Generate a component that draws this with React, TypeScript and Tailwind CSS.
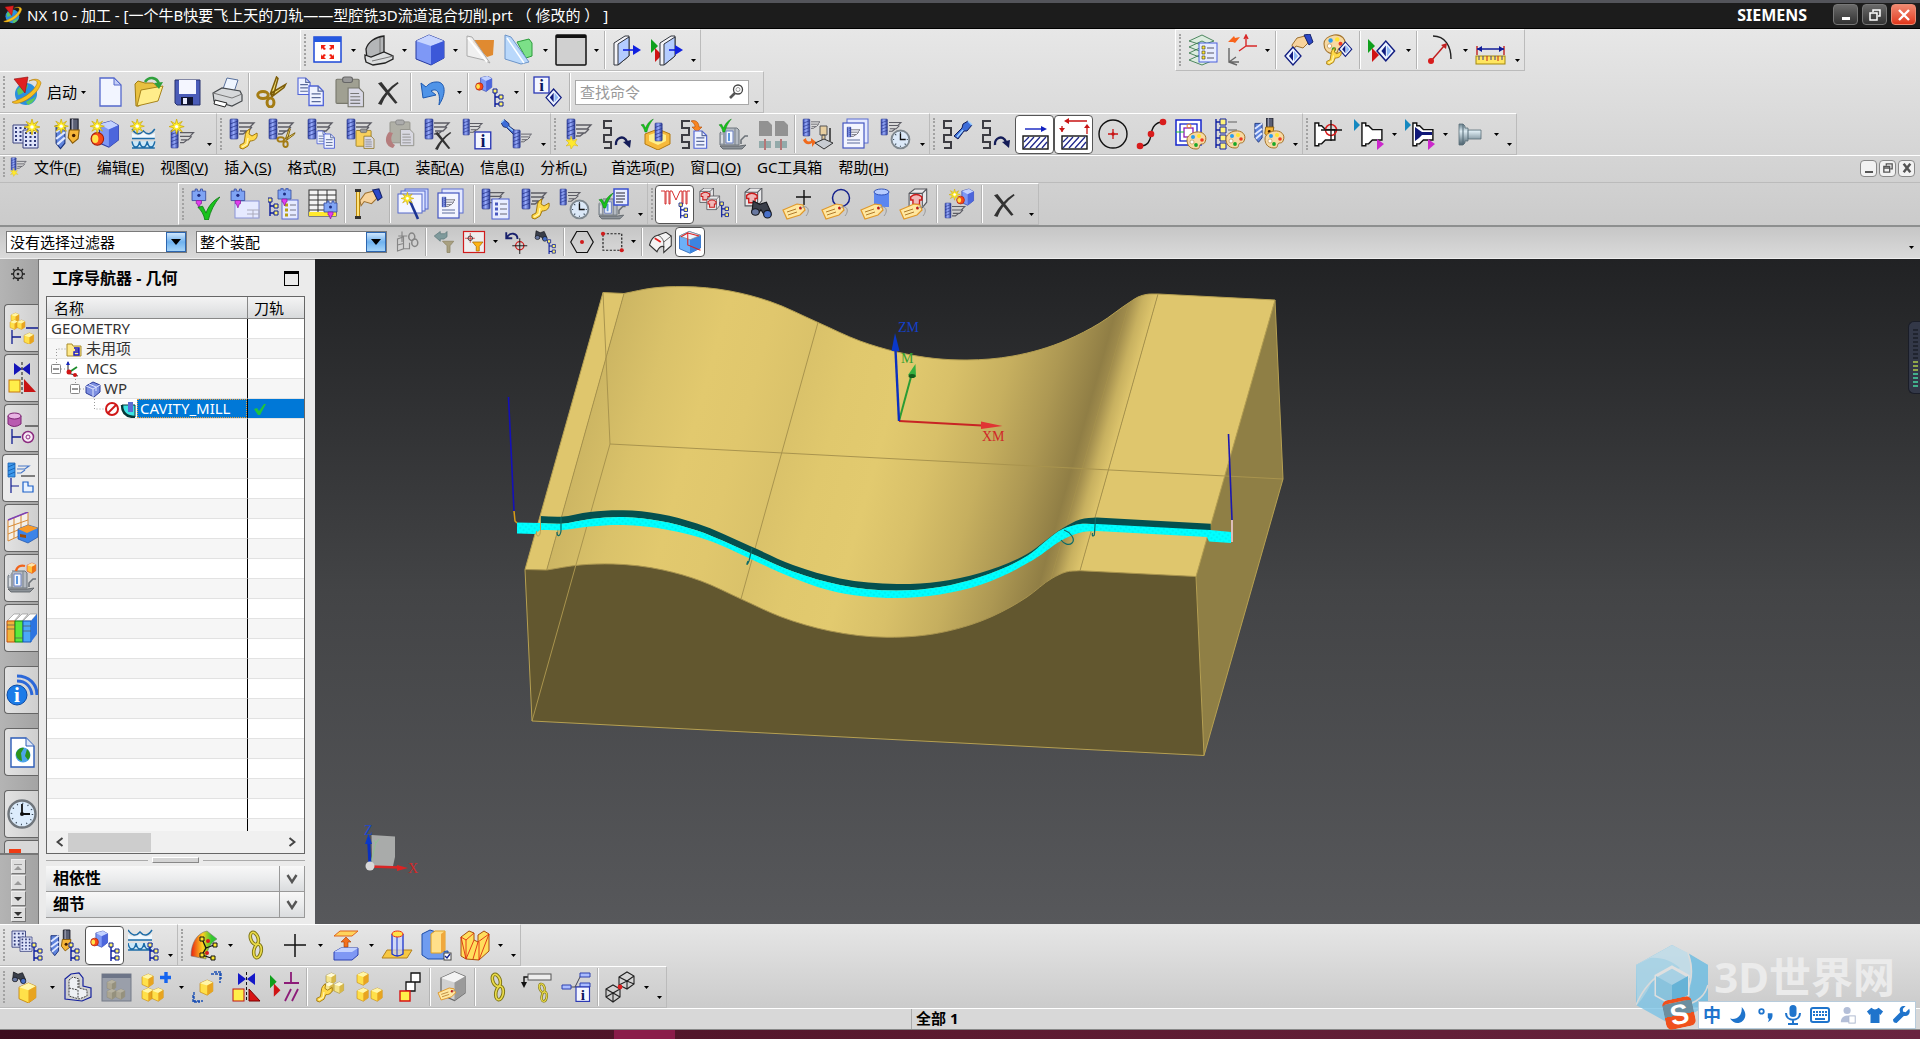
import { useState, type ReactNode } from 'react';

type Pt = [number, number];
type Place = { x?: number; y?: number; s?: number; children?: ReactNode };

const At = ({ x = 0, y = 0, s = 1, children }: Place) => (
  <g transform={`translate(${x} ${y}) scale(${s})`}>{children}</g>
);

/* ---------- icon parts ---------- */

const Drill = (p: Place) => (
  <At {...p}>
    <rect x="0" y="0" width="8" height="20" rx="1" fill="url(#drill)" stroke="#26358c" strokeWidth=".6" />
    <path d="M0 5l8-3M0 9l8-3M0 13l8-3M0 17l8-3" stroke="#26358c" strokeWidth=".8" />
  </At>
);
const Lines = (p: Place) => (
  <At {...p}>
    <path d="M0 3h15l-4 4H0M13 7l-4 4H1M8 11l-4 3H0" fill="none" stroke="#5c5c64" strokeWidth="1.3" />
  </At>
);
const Op = (p: Place) => (
  <At {...p}>
    <Drill x={2} y={1} />
    <Lines x={11} y={2} />
  </At>
);
const Star = (p: Place) => (
  <At {...p}>
    <path d="M8 0l1.4 5L14 2.4 11 6.6l5 1.4-5 1.4 3 4.2-4.6-2.6L8 16l-1.4-5L2 13.6l3-4.2L0 8l5-1.4L2 2.4 6.6 5z" fill="#ffee2e" stroke="#c9a400" strokeWidth=".7" />
    <circle cx="8" cy="8" r="1.8" fill="#fff" />
  </At>
);
const Wrench = (p: Place) => (
  <At {...p}>
    <path d="M12 1l-1 5 3 2 5-3c1 5-2 8-7 8l-2 5-5 3-3-1 0-3 4-2 1-6c0-4 2-7 5-8z" fill="#ffd94a" stroke="#9a6d00" strokeWidth=".9" />
    <path d="M4 19l5-3 1-6" fill="none" stroke="#fff6b8" strokeWidth="1.3" />
  </At>
);
const Scissors = (p: Place) => (
  <At {...p}>
    <path d="M9 11L13 0l1 1-3 11zM9 11L19 5l-1 2-8 6z" fill="#f5e27a" stroke="#7c5c08" />
    <ellipse cx="4" cy="12" rx="3.5" ry="2.3" fill="none" stroke="#a47c14" strokeWidth="2" />
    <ellipse cx="9" cy="17" rx="2.3" ry="3" fill="none" stroke="#a47c14" strokeWidth="2" />
  </At>
);
const Page = (p: Place) => (
  <At {...p}>
    <path d="M0 0h7l4 4v11H0z" fill="#eef2ff" stroke="#4f63d8" />
    <path d="M7 0v4h4M2 6h7M2 9h7M2 12h7" fill="none" stroke="#5a6a9a" />
  </At>
);
const Clip = ({ c = '#a0a092', d = '#77776c', ...p }: Place & { c?: string; d?: string }) => (
  <At {...p}>
    <rect x="0" y="2" width="21" height="22" rx="1" fill={c} stroke={d} />
    <rect x="6" y="0" width="9" height="5" rx="2" fill="#999" stroke="#666" />
    <path d="M11 10h10l4 4v13H11z" fill="#d9d9e6" stroke={d} />
    <path d="M13 15h8M13 18h9M13 21h9M13 24h9" stroke="#777" />
  </At>
);
const Cross = (p: Place) => (
  <At {...p}>
    <path d="M0 1l3-1 14 18-2 1zM17 0l1 1Q7 9 3 20l-3-1Q7 6 17 0z" fill="#333" />
  </At>
);
const Info = (p: Place) => (
  <At {...p}>
    <rect x="0" y="0" width="15" height="16" fill="#f4f6ff" stroke="#2a38b4" strokeWidth="1.3" />
    <text x="7.5" y="14" fontFamily="Liberation Serif, serif" fontWeight="bold" fontSize="17" textAnchor="middle" fill="#0c1660">i</text>
  </At>
);
const Clock = (p: Place) => (
  <At {...p}>
    <circle cx="9" cy="9" r="8.5" fill="#dce9f8" stroke="#7f888f" strokeWidth="1.8" />
    <path d="M9 3v6h5" fill="none" stroke="#111" strokeWidth="1.3" />
    <path d="M9 2v1M9 15v1M2 9h1M15 9h1M4 4l1 1M13 13l1 1M4 14l1-1" stroke="#345" />
  </At>
);
const Check = (p: Place) => (
  <At {...p}>
    <path d="M0 9l4-1 3 6C9 8 13 3 19 0c-5 6-8 12-10 20H6C5 15 3 12 0 9z" fill="#18c41c" stroke="#0a7a10" strokeWidth=".7" />
  </At>
);
const Tree = (p: Place) => (
  <At {...p}>
    <path d="M2 4v14M2 8h4M2 15h4" fill="none" stroke="#0a1c9c" strokeWidth="1.4" />
    <path d="M0 0h4v4H0zM6 6h4v4H6zM6 13h4v4H6z" fill="#fff36a" stroke="#0a1c9c" />
  </At>
);
const Cube = ({ a = '#a9bcff', b = '#5572e8', c = '#2d43b8', e = '#2a3aa0', ...p }: Place & { a?: string; b?: string; c?: string; e?: string }) => (
  <At {...p}>
    <path d="M0 4L9 0l7 3v11l-7 5-9-4z" fill={b} stroke={e} strokeWidth=".8" />
    <path d="M0 4L9 0l7 3-7 4z" fill={a} />
    <path d="M9 7l7-4v11l-7 5z" fill={c} />
  </At>
);
const Yellow = (p: Place) => <Cube {...p} a="#fff6a8" b="#ffe04a" c="#e8a420" e="#c48208" />;
const Palette = (p: Place) => (
  <At {...p}>
    <path d="M9 0c7-1 12 4 9 10-1 3-4 1-5 3s0 4-4 4C2 17 0 12 0 8s4-7 9-8z" fill="#f7d9a2" stroke="#a4742c" />
    <circle cx="6" cy="5" r="2" fill="#2a9df0" />
    <circle cx="12" cy="4" r="2" fill="#ffe52e" />
    <circle cx="15" cy="8" r="1.8" fill="#f03a20" />
    <circle cx="5" cy="10" r="2" fill="#fff" stroke="#a4742c" strokeWidth=".5" />
    <circle cx="9" cy="13" r="1.9" fill="#18a828" />
  </At>
);
const Machine = (p: Place) => (
  <At {...p}>
    <path d="M0 6l4-5h13l2 2v15H0z" fill="#b4bac2" stroke="#6d757c" />
    <path d="M4 1v17M15 1v17" stroke="#7a828a" />
    <path d="M6 4h7v12H6z" fill="#f4f8ff" stroke="#6c80c0" />
    <path d="M9 6v8" stroke="#5c98e0" strokeWidth="2" />
    <path d="M1 5l3-4M2 8v8" stroke="#f0f2f4" strokeWidth="1.2" />
    <path d="M0 19h19l7-1-4 4H3z" fill="#8c9298" stroke="#555b60" strokeWidth=".8" />
    <path d="M21 17v-4l4-4h3" fill="none" stroke="#6c7278" strokeWidth="1.6" />
  </At>
);
const Coil = (p: Place) => (
  <At {...p}>
    <path d="M9 1H1v7h7v7H1v7h7v6H1" fill="none" stroke="#3c3c42" strokeWidth="2" />
  </At>
);
const Spin = (p: Place) => (
  <At {...p}>
    <path d="M1 10C0 3 9-1 12 7" fill="none" stroke="#141c58" strokeWidth="2.4" />
    <path d="M8 7l8-2-1 8z" fill="#141c58" />
  </At>
);
const Torch = (p: Place) => (
  <At {...p}>
    <path d="M9 3l5-3 4 4-5 6-3 0-6 8-4-3 8-8z" fill="#3c6cd8" stroke="#101c58" />
    <path d="M14 0l4 4M3 16l6-7" stroke="#9fd0ff" strokeWidth="1.6" />
  </At>
);
const Spindle = (p: Place) => (
  <At {...p}>
    <path d="M1 2h3V0h2v2h3V0h2v2h3v9H1z" fill="#7fa4f4" stroke="#344a9c" strokeWidth=".8" />
    <circle cx="7.5" cy="6" r="1.5" fill="#1c2c80" />
    <path d="M5 11h5v3H9l-1.5 4L6 14H5z" fill="#e23cf0" stroke="#8a1c9c" strokeWidth=".7" />
  </At>
);
const Bino = (p: Place) => (
  <At {...p}>
    <path d="M2 0l6 3 6-2 4 9-5 4-4-6-3 4-5-3z" fill="#3a3f4a" stroke="#15171c" />
    <ellipse cx="4" cy="10" rx="3.5" ry="3" fill="#6878a0" stroke="#15171c" />
    <ellipse cx="15" cy="12" rx="3.5" ry="3.5" fill="#4870c8" stroke="#15171c" />
  </At>
);
const Tag = (p: Place) => (
  <At {...p}>
    <path d="M0 6L14 0l6 1 2 5-5 5-13 4z" fill="#ffe7a0" stroke="#e0982a" strokeWidth="1.2" />
    <path d="M4 8l9-3M5 11l9-3" stroke="#b07a2c" />
    <circle cx="17.5" cy="4" r="1.5" fill="#c01818" />
    <path d="M18 4c6-4 10 2 5 8" fill="none" stroke="#999" />
  </At>
);
const Chain = (p: Place) => (
  <At {...p}>
    <g fill="none" stroke="#7d7414" strokeWidth="3.4">
      <ellipse cx="7" cy="7" rx="3.5" ry="6" transform="rotate(-20 7 7)" />
      <ellipse cx="10" cy="19" rx="3.5" ry="6.5" transform="rotate(10 10 19)" />
    </g>
    <g fill="none" stroke="#eadb4a" strokeWidth="1.6">
      <ellipse cx="7" cy="7" rx="3.5" ry="6" transform="rotate(-20 7 7)" />
      <ellipse cx="10" cy="19" rx="3.5" ry="6.5" transform="rotate(10 10 19)" />
    </g>
  </At>
);
const Gem = (p: Place) => (
  <At {...p}>
    <path d="M0 9L8 0l8 9-8 9z" fill="#eef4ff" stroke="#101c80" strokeWidth="1.3" />
    <path d="M8 4v10L4 9z" fill="#101c80" />
    <path d="M9 4l4 5-4 5z" fill="#8fb8f4" />
  </At>
);
const Part = (p: Place) => (
  <At {...p}>
    <path d="M9 3l11-3 7 4v14l-9 7-9-4z" fill="#7f98f4" stroke="#2c3ca4" />
    <path d="M9 3l11-3 7 4-9 4z" fill="#c3d2ff" />
    <path d="M18 8l9-4v14l-9 7z" fill="#4c66dc" />
    <ellipse cx="7" cy="17" rx="6" ry="6" fill="#f84818" stroke="#a01c08" />
    <ellipse cx="5" cy="17" rx="3" ry="4" fill="#ffe34a" />
  </At>
);
const Housing = (p: Place) => (
  <At {...p}>
    <path d="M1 4l5-4h11v12l-4 5H1z" fill="#e8e8ea" stroke="#55575c" />
    <path d="M13 4l4-4M1 4h12v13" fill="none" stroke="#55575c" />
    <path d="M2.5 7q5-4 10 0v3h-2v4h-6v-4h-2z" fill="#f0b8b8" stroke="#cc1c1c" strokeWidth="1.3" />
  </At>
);
const Hand = (p: Place) => (
  <At {...p}>
    <path d="M0 10l5-7 8-2 3 7-5 5-7-2-3 4z" fill="#f8d39c" stroke="#9c7030" />
    <path d="M12 0l6-1 3 8-4 3z" fill="#2c48c8" stroke="#16246c" />
  </At>
);
const Flags = (p: Place) => (
  <At {...p}>
    <path d="M0 0l7 7-7 7z" fill="#10a01c" />
    <path d="M4 9l7 7-7 7z" fill="#d01414" />
  </At>
);
const Grid = (p: Place) => (
  <At {...p}>
    <path d="M0 0h15v18H0z" fill="#dfe4fa" stroke="#3c4480" />
    <path d="M3 2v15M7.5 2v15M12 2v15" stroke="#303a78" strokeWidth="2" strokeDasharray="2 2" />
  </At>
);
const Waves = (p: Place) => (
  <At {...p}>
    <path d="M0 4q6 5 12 0 6 5 12 0v6H0z" fill="#eef8ff" />
    <path d="M0 0q6 9 12 2 6 7 12-2M0 10h24" fill="none" stroke="#1c6ca8" strokeWidth="1.5" />
    <path d="M0 13h24v6H0z" fill="#cce8f8" />
    <path d="M0 13q1 6 4 6t4-6q1 6 4 6t4-6q1 6 4 6t4-6M0 20h24" fill="none" stroke="#1c6ca8" strokeWidth="1.5" />
  </At>
);
const Tool = (p: Place) => (
  <At {...p}>
    <path d="M14 0h7v12h-7z" fill="#5a5f74" stroke="#1a1c28" />
    <path d="M16 0v12" stroke="#aab" />
    <path d="M13 10h9l-1 8-5 4-4-5z" fill="#f6b638" stroke="#8a5c08" />
    <circle cx="17" cy="15" r="1.6" fill="#401c00" />
    <path d="M1 6h8v16l-4 5-4-5z" fill="#5f84dc" stroke="#1c347c" />
    <path d="M1 12l8-6M1 18l8-6M2 23l7-6" stroke="#dfe8ff" strokeWidth="2" />
  </At>
);
const Plane = (p: Place) => (
  <At {...p}>
    <path d="M0 7L11 0h4v20L4 29H0z" fill="#f4f4f8" stroke="#30343c" />
    <path d="M4 8l11-7v19L4 29z" fill="#b4ccff" stroke="#30343c" />
  </At>
);
const Holder = (p: Place) => (
  <At {...p}>
    <path d="M1 1h4v3h3l4 4h10v11H12l-4 4H5v2H1z" fill="#fff" stroke="#111" strokeWidth="1.5" />
  </At>
);

const hatch = (
  <>
    <rect x="4" y="18" width="25" height="13" fill="#fff" stroke="#111" strokeWidth="1.4" />
    <path d="M5 30l10-11M11 30l10-11M17 30l10-11M23 30l5-6M5 24l5-5" stroke="#20288c" strokeWidth="1.3" />
  </>
);

const ICONS: Record<string, ReactNode> = {
  fit: <><rect x="2" y="3" width="27" height="25" fill="#fff" stroke="#1c48d8" strokeWidth="1.5" /><path d="M2 3h27v5H2z" fill="#2458e0" /><path d="M9 11h5l-2 2 2 2-2 1-2-2-1 2zM22 11h-5l2 2-2 2 2 1 2-2 1 2zM9 25h5l-2-2 2-2-2-1-2 2-1-2zM22 25h-5l2-2-2-2 2-1 2 2 1-2z" fill="#f02010" /></>,
  orient: <><path d="M3 15C5 8 12 3 21 2v17L4 25z" fill="#b4b6b8" stroke="#222" strokeWidth="1.3" /><path d="M17 4v16" stroke="#777" /><path d="M2 21l6 2 13-5 9 4v3l-8 4-12 2-7-3-1-4z" fill="#dcdedf" stroke="#222" strokeWidth="1.3" /><path d="M9 27l13-3 8-2" fill="none" stroke="#777" /></>,
  shade: <><path d="M2 7L15 1l15 6v17l-13 7L2 25z" fill="#7e98f6" stroke="#2438a0" /><path d="M2 7L15 1l15 6-13 5z" fill="#c6d4ff" /><path d="M17 12l13-5v17l-13 7z" fill="#3c58d8" /></>,
  clip: <><path d="M8 6h21l-1 15-6 2L8 9z" fill="#e08a30" /><path d="M2 2l5 1 18 26-6-3L2 22z" fill="#f2f2f2" fillOpacity=".85" stroke="#aaa" /><path d="M3 4l19 24" stroke="#fff" strokeWidth="2" /></>,
  clip2: <><path d="M13 8l12-3 3 4v13l-6 2z" fill="#7ce088" stroke="#2a9c3a" /><path d="M1 1l6 2 18 25-8 2L1 25z" fill="#b9d8fb" stroke="#6c94c8" /><path d="M3 4l17 25" stroke="#fff" strokeWidth="1.5" /></>,
  face: <><rect x="1" y="1" width="30" height="30" rx="1" fill="#d0d0d0" stroke="#111" strokeWidth="1.5" /><path d="M1 1h30v3H1z" fill="#111" /></>,
  plane: <><Plane x={2} y={2} /><path d="M11 16h11" stroke="#1020e0" strokeWidth="1.6" /><path d="M21 11l8 5-8 5z" fill="#1020e0" /></>,
  flip: <><Flags x={0} y={5} /><Plane x={9} y={2} /><path d="M18 16h7" stroke="#1020e0" strokeWidth="1.6" /><path d="M24 11l8 5-8 5z" fill="#1020e0" /></>,
  layers: <><path d="M2 7l13-6 12 6-12 4zM2 13l13-6 12 6-12 5zM2 19l13-6 12 6-12 5zM2 26l13-6 12 6-12 5z" fill="#dcecdf" stroke="#3c7c50" strokeWidth=".9" /><rect x="12" y="9" width="18" height="19" fill="#e6ecff" stroke="#4a60dc" /><path d="M15 12h3v3h-3zM15 17h3v3h-3zM15 22h3v3h-3z" fill="#ffe92e" stroke="#333" strokeWidth=".6" /><path d="M20 14h7M20 19h7M20 24h7" stroke="#556" /></>,
  wcs: <><path d="M2 8l6-6 1 2 5-1-5 6-2-1z" fill="#f8641c" /><path d="M20 2v10h11M20 12l-7 5M18 5l2-4 2 4" fill="none" stroke="#d82828" strokeWidth="1.4" /><path d="M3 14v14h10M3 28l7-5M3 28l8 3" fill="none" stroke="#666" strokeWidth="1.4" /></>,
  show: <><Hand x={9} y={1} /><Gem x={2} y={13} /></>,
  style: <><Palette x={2} y={1} s={1.1} /><Gem x={17} y={8} s={0.8} /><Wrench x={3} y={13} s={0.85} /></>,
  move: <><Flags x={1} y={5} /><Gem x={10} y={7} s={1.1} /></>,
  arc: <><path d="M9 2c12 0 18 10 18 23" fill="none" stroke="#222" strokeWidth="1.4" /><path d="M7 27L20 12" stroke="#c02020" strokeWidth="1.5" /><path d="M17 11l6-2-1 6z" fill="#c02020" /><circle cx="7" cy="27" r="3" fill="#d81c1c" /></>,
  ruler: <><path d="M2 12v9M29 12v9" stroke="#c02020" strokeWidth="1.4" /><path d="M2 15h27" stroke="#101c98" strokeWidth="1.5" /><path d="M2 15l5-3v6zM29 15l-5-3v6z" fill="#101c98" /><rect x="1" y="22" width="29" height="8" fill="#ffe660" stroke="#a4880c" /><path d="M4 22v4M8 22v4M16 22v4M20 22v4M27 22v4" stroke="#3c3c8c" /><path d="M12 22v5M23 22v5" stroke="#c02020" /></>,

  new: <><path d="M6 2h14l7 7v21H6z" fill="#f2f5ff" stroke="#5468cc" strokeWidth="1.3" /><path d="M20 2v7h7z" fill="#c4cef6" stroke="#5468cc" /></>,
  open: <><path d="M2 8l3-3 7 2h8l4 3v5L6 30H3z" fill="#e8c040" stroke="#a07c10" /><path d="M4 30l4-16 22-4-5 15z" fill="#ffed8a" stroke="#a8841c" /><path d="M12 6c4-6 12-5 14 2" fill="none" stroke="#2fa03c" strokeWidth="2.6" /><path d="M21 7l9-1-4 7z" fill="#2fa03c" /></>,
  save: <><path d="M3 4h25v25H5l-2-2z" fill="#4a5cb8" stroke="#26306c" /><path d="M7 4h17v14H7z" fill="#f4f6ff" /><path d="M9 21h12v8H9z" fill="#101430" /><path d="M11 22h4v6h-4z" fill="#e8ecff" /></>,
  print: <><path d="M12 13L16 2l11 2-4 12z" fill="#eef5ff" stroke="#58709c" /><path d="M2 17l9-5 18 3 2 4v6l-10 5-18-5z" fill="#d6d8da" stroke="#44484c" strokeWidth="1.2" /><path d="M2 17l19 5 10-4" fill="none" stroke="#777" /><path d="M4 24l12 3-2 4-11-3z" fill="#fff" stroke="#222" /></>,
  cut: <Scissors x={1} y={1} s={1.5} />,
  copy: <><Page x={3} y={2} s={1.1} /><Page x={14} y={10} s={1.3} /></>,
  paste: <Clip x={2} y={1} s={1.1} />,
  del: <Cross x={5} y={6} s={1.15} />,
  undo: <path d="M3 7l2 15 13-3-5-4c5-3 10 0 8 14 9-14 5-24-3-23-6 0-9 4-10 5z" fill="#4f94e8" stroke="#1c58b0" />,
  nav: <><Part x={0} y={0} s={0.62} /><Tree x={18} y={13} /></>,
  cmdinfo: <><Info x={2} y={1} /><Gem x={14} y={13} s={0.95} /></>,

  mkProg: <><Grid x={2} y={7} /><Grid x={12} y={12} /><Star x={13} y={1} /></>,
  mkTool: <><Tool x={5} y={1} s={1.1} /><Star x={4} y={1} s={0.9} /></>,
  mkGeom: <><Part x={1} y={3} s={1.05} /><Star x={1} y={1} s={0.9} /></>,
  mkMeth: <><Waves x={4} y={11} s={0.95} /><Star x={2} y={1} s={0.9} /></>,
  mkOp: <><Drill x={4} y={12} s={0.9} /><Lines x={13} y={12} s={0.9} /><Star x={2} y={1} s={0.95} /></>,
  opEdit: <><Op /><Wrench x={10} y={10} /></>,
  opCut: <><Op /><Scissors x={10} y={10} s={0.95} /></>,
  opCopy: <><Op /><Page x={11} y={13} s={0.85} /><Page x={18} y={16} s={0.95} /></>,
  opPaste: <><Op /><Clip x={11} y={11} s={0.72} c="#f8d05c" d="#8a6c14" /></>,
  pasteIn: <><g opacity=".7"><Clip x={6} y={2} s={0.95} /><path d="M9 30C1 28 0 20 5 14l4 1C6 20 7 25 11 27z" fill="#a85858" /></g></>,
  opDel: <><Op /><Cross x={12} y={14} s={0.9} /></>,
  opInfo: <><Drill x={1} y={1} s={0.8} /><Lines x={8} y={3} s={0.8} /><Info x={13} y={14} s={1.05} /></>,
  opTorch: <><g transform="rotate(-90 8 8)"><Torch x={0} y={0} s={0.8} /></g><Drill x={12} y={12} s={0.9} /><Lines x={20} y={14} s={0.7} /></>,
  gen: <><Drill x={5} y={1} /><Lines x={14} y={4} /><path d="M9 18l2 5 4-2-2 4 3 3-4-1-3 4-1-4-4 1 3-3-3-3 4 0z" fill="#ffe92e" stroke="#d0b010" strokeWidth=".5" /></>,
  replay: <><Coil x={2} y={2} /><Spin x={14} y={17} /></>,
  verify: <><path d="M5 16l13-5 12 5v10l-12 6-13-6z" fill="#f6b93c" stroke="#b47a10" /><path d="M9 17l9-3 8 3v6l-8 4-9-4z" fill="#fff08a" /><Drill x={15} y={5} s={0.9} /><Check x={1} y={1} s={0.65} /></>,
  post: <><Coil x={2} y={2} /><path d="M12 3c6-2 8 3 8 6h3l-5 5-5-5h3c0-2-1-4-4-6z" fill="#f88420" stroke="#b04c08" strokeWidth=".6" /><Page x={15} y={13} s={1.15} /></>,
  machineOk: <><Machine x={2} y={9} /><Check x={1} y={1} s={0.65} /></>,
  compare: <g opacity=".75"><path d="M2 3h9l4 4v11H2zM18 3h9l4 4v11H18z" fill="#7b7b7b" /><path d="M2 23h12v7H2zM18 23h12v7H18z" fill="#7c9c9c" /><path d="M8 21v11M24 21v11" stroke="#a85858" strokeWidth="2" /></g>,
  toMachine: <><Drill x={1} y={1} s={0.85} /><Lines x={9} y={2} s={0.6} /><path d="M1 22c2 5 6 5 9 3v4l4-5-5-4v3c-3 1-5 0-5-3z" fill="#f06a1c" /><path d="M18 8h7v9h-7zM20 17h3v6h-3z" fill="#e8cfa0" stroke="#555" /><path d="M13 25l9-4 9 4-9 6z" fill="#c8ccd2" stroke="#333" /><path d="M28 10v14" stroke="#555" strokeWidth="2" /></>,
  shop: <><rect x="6" y="1" width="21" height="24" fill="#e4e9ff" stroke="#5a6cd0" /><rect x="2" y="5" width="21" height="25" fill="#f3f5ff" stroke="#4456c0" strokeWidth="1.2" /><Drill x={6} y={9} s={0.5} /><Lines x={10} y={10} s={0.6} /><path d="M6 22h13M6 25h13" stroke="#5a6a9a" /></>,
  opTime: <><Drill x={1} y={1} s={0.8} /><Lines x={9} y={2} s={0.8} /><Clock x={11} y={12} s={1.05} /></>,
  coilTorch: <><Coil x={2} y={2} /><Torch x={13} y={3} /></>,
  feed: <><path d="M6 11h18" stroke="#1020c0" strokeWidth="1.4" /><path d="M22 8l6 3-6 3z" fill="#1020c0" />{hatch}</>,
  rapid: <><path d="M8 3h21M4 8v6M29 16V8" stroke="#c81414" strokeWidth="1.3" /><path d="M11 0L6 3l5 3zM1 10h6l-3 4zM26 10h6l-3-4z" fill="#c81414" />{hatch}</>,
  circle: <><circle cx="16" cy="16" r="14" fill="none" stroke="#111" strokeWidth="1.4" /><path d="M11 16h10M16 11v10" stroke="#c81414" strokeWidth="1.3" /><circle cx="16" cy="16" r="1.7" fill="#c81414" /></>,
  spline: <><path d="M4 28c8 0 10-5 11-11 1-8 4-13 12-13" fill="none" stroke="#111" strokeWidth="1.4" /><circle cx="4" cy="28" r="3.3" fill="#d81c1c" /><circle cx="15" cy="16" r="3.3" fill="#d81c1c" /><circle cx="27" cy="4" r="3.3" fill="#d81c1c" /></>,
  pathPal: <><rect x="1" y="2" width="25" height="25" fill="#fff" stroke="#1424cc" strokeWidth="1.5" /><rect x="5" y="6" width="17" height="17" fill="none" stroke="#1424cc" strokeWidth="1.3" /><rect x="9" y="10" width="9" height="9" fill="none" stroke="#8c1cb4" strokeWidth="1.3" /><circle cx="14" cy="8" r="2" fill="none" stroke="#f08420" /><path d="M1 14h8" stroke="#18c030" /><Palette x={12} y={14} /></>,
  treePal: <><path d="M2 1v29M2 4h5M2 12h5M2 20h5M2 27h5" stroke="#1020a0" strokeWidth="1.4" fill="none" /><path d="M6 1h6v6H6zM6 9h6v6H6zM6 17h6v6H6zM6 25h6v6H6z" fill="#fff27a" stroke="#1020a0" /><path d="M14 4h9M14 12h9" stroke="#888" strokeWidth="1.4" /><Palette x={12} y={13} /></>,
  toolPal: <><Tool x={1} y={0} s={0.9} /><Palette x={12} y={13} /></>,
  holdPt: <><Holder x={0} y={4} s={0.95} /><circle cx="17" cy="12" r="5.5" fill="none" stroke="#d81c1c" strokeWidth="1.5" /><path d="M17 2v21M7 12h21" stroke="#111" strokeWidth="1.3" /></>,
  hold: <><path d="M1 1l6 6-6 6z" fill="#1488c0" /><Holder x={8} y={4} s={0.95} /><path d="M24 21l7 5-7 6z" fill="#cc28cc" /></>,
  holdIn: <><path d="M1 1l6 6-6 6z" fill="#1488c0" /><Holder x={8} y={4} s={0.95} /><path d="M11 9l4 3 3 2h10v3H18l-3 3-4 3z" fill="#101878" /><path d="M24 21l7 5-7 6z" fill="#cc28cc" /></>,
  part3d: <><path d="M4 6h4l2 2v2h3v2h13v9H13v2h-3v2l-2 2H4z" fill="url(#steel)" stroke="#5c707a" strokeWidth=".8" /><path d="M8 6v21M13 12v9" stroke="#556a76" /></>,

  spOk: <><Spindle x={1} y={1} s={1.05} /><Check x={8} y={9} s={1.15} /></>,
  spPage: <><rect x="6" y="13" width="24" height="17" fill="#e6eaff" stroke="#8a94d8" /><path d="M18 22h12v8M18 26h12M24 22v8" fill="none" stroke="#aab" /><Spindle x={1} y={1} s={1.05} /></>,
  spTree: <><rect x="14" y="12" width="16" height="19" fill="#e6ebff" stroke="#5a6cd0" /><path d="M17 17h3M17 22h3M17 27h3" stroke="#b8a010" strokeWidth="3" /><path d="M22 17h6M22 22h6M22 27h6" stroke="#778" /><Spindle x={9} y={0} /><Tree x={0} y={10} /></>,
  spGrid: <><rect x="2" y="2" width="27" height="26" fill="#f4f4f4" stroke="#333" /><path d="M2 7h27M2 12h27M2 17h27M2 22h27M11 2v26M20 2v26" stroke="#333" /><path d="M2 24h27v4H2z" fill="#ffe92e" /><Spindle x={16} y={13} /></>,
  probe: <><path d="M6 4v24" stroke="#b8860c" strokeWidth="4" /><path d="M6 4v24" stroke="#ffe37a" strokeWidth="2" /><path d="M3 1h6v3H3zM3 28h6v3H3z" fill="#333" /><Hand x={8} y={2} s={1.05} /></>,
  wand: <><rect x="8" y="1" width="23" height="20" fill="#cdd8ff" stroke="#5468cc" /><rect x="4" y="3" width="24" height="20" fill="#dfe6ff" stroke="#5468cc" /><rect x="1" y="6" width="24" height="19" fill="#f4f6ff" stroke="#5468cc" /><path d="M13 13l8 18" stroke="#1c3494" strokeWidth="2.6" /><Star x={4} y={4} s={0.8} /></>,
  list: <><Drill x={1} y={1} /><Lines x={9} y={2} s={0.9} /><rect x="11" y="11" width="17" height="20" fill="#e8edff" stroke="#4a5ed0" /><path d="M14 16h3M14 21h3M14 26h3" stroke="#4858c0" strokeWidth="3" /><path d="M19 16h7M19 21h7M19 26h7" stroke="#667" /></>,
  sim: <><Machine x={1} y={10} s={0.95} /><rect x="16" y="1" width="14" height="16" fill="#e8edff" stroke="#3a50d0" strokeWidth="1.5" /><path d="M18 5h9M18 8h9M18 11h9M18 14h7" stroke="#223" /><Check x={1} y={5} s={0.75} /></>,
  profile: <><path d="M2 3h4v13h1V3h3v13h1V3h2l4 9 4-9h2v13h1V3h3v13h1V3h3" fill="none" stroke="#d01c1c" strokeWidth=".9" /><Tree x={20} y={15} s={0.85} /></>,
  feats: <><Housing x={1} y={0} s={0.85} /><Housing x={8} y={8} s={0.8} /><Tree x={22} y={14} s={0.85} /></>,
  find: <><Housing x={1} y={0} s={1.05} /><Bino x={8} y={13} s={1.1} /></>,
  tagPt: <><path d="M22 2v15M14 9h15" stroke="#111" strokeWidth="1.4" /><Tag x={1} y={16} /></>,
  tagO: <><circle cx="20" cy="10" r="8.5" fill="none" stroke="#14208c" strokeWidth="1.5" /><Tag x={1} y={16} /></>,
  tagCyl: <><path d="M14 4v15h15V4z" fill="#5b86f0" /><ellipse cx="21.5" cy="4" rx="7.5" ry="3" fill="#b6ccff" stroke="#3454b8" /><Tag x={1} y={16} /></>,
  tagBox: <><Housing x={9} y={1} s={1.1} /><Tag x={1} y={16} /></>,
  feat2: <><Part x={12} y={1} s={0.65} /><Star x={5} y={1} s={0.7} /><Drill x={1} y={15} s={0.75} /><Lines x={8} y={16} s={0.85} /></>,

  gNav: <><Grid x={1} y={2} s={0.9} /><Grid x={9} y={8} s={0.8} /><Tree x={21} y={14} /></>,
  tNav: <><Tool x={0} y={1} s={0.95} /><Tree x={19} y={14} /></>,
  pNav: <><Part x={1} y={2} s={0.65} /><Tree x={20} y={14} /></>,
  wNav: <><Waves x={0} y={1} /><Tree x={20} y={14} /></>,
  wave: <><path d="M2 27C2 14 8 4 18 2l10 8c-8 5-10 12-11 20z" fill="url(#heat)" stroke="#777" strokeWidth=".6" /><path d="M13 10l4 9 8-3M17 19l-4 7 12 4" fill="none" stroke="#111" strokeWidth="1.3" /><path d="M11 8h4v4h-4zM24 14h4v4h-4zM11 24h4v4h-4zM22 27h4v4h-4z" fill="#ffe92e" stroke="#111" /><circle cx="19" cy="12" r="2" fill="#d81c1c" /><circle cx="18" cy="24" r="2" fill="#d81c1c" /></>,
  chain: <Chain x={7} y={2} s={1.05} />,
  plus: <path d="M16 5v23M5 16h22" stroke="#111" strokeWidth="1.5" />,
  extract: <><path d="M4 7l6-5h18l-6 5z" fill="#ffd45c" stroke="#e0641c" /><path d="M14 18v-5h-3l5-5 5 5h-3v5z" fill="#f4701c" stroke="#a03c08" strokeWidth=".6" /><path d="M4 23l7-4h17v7l-6 5H4z" fill="#7f98f4" stroke="#2c40b0" /><path d="M4 23l7-4h17l-6 4z" fill="#c3d2ff" /></>,
  cyl: <><path d="M1 29l5-8h25l-5 8z" fill="#f7c843" stroke="#b4801c" /><path d="M11 5v20q5 4 11 0V5" fill="#c9d4ff" fillOpacity=".7" stroke="#1c34cc" strokeWidth="1.3" /><path d="M16 7v20" stroke="#1c34cc" /><ellipse cx="16.5" cy="5" rx="5.5" ry="3" fill="#ffe34a" stroke="#f02c10" /></>,
  copyF: <><path d="M2 5l8-4 6 2v20l12-1v5l-5 3H8l-6-4z" fill="#6f9cf0" stroke="#1c4ca8" /><path d="M11 5l4-3h10v19l-4 3H11z" fill="#ffe08a" stroke="#e0a020" /><path d="M21 5l4-3v19l-4 3z" fill="#f0a83c" /><rect x="24" y="24" width="7" height="7" fill="#fff" stroke="#444" /><path d="M25 27l2 2 3-4" stroke="#10208c" fill="none" strokeWidth="1.3" /></>,
  facet: <><path d="M2 8l8-6 5 2v7l4 2V6l6-4 5 3v17l-10 9-13-1-5-3z" fill="#ffde5c" stroke="#a8500c" /><path d="M2 8l5 3 8-7M7 11v19M15 11l-8 19M19 13l-5 17M19 13l11-8M20 31V13M20 31L30 5M2 8l5 22" fill="none" stroke="#e02c10" strokeWidth=".9" /></>,

  bCube: <><Yellow x={8} y={12} s={1.05} /><Bino x={1} y={1} s={0.75} /></>,
  asmDash: <><path d="M3 8l6-5 8-1 4 5v8l8 2v9l-9 4-17-2z" fill="none" stroke="#14209c" strokeWidth="1.2" /><path d="M7 9l4-3 6 2v9l8 2v6l-8 3-10-3zM7 17l9 2v8M16 9v9" fill="#eef0f4" stroke="#444" strokeDasharray="2 1" /></>,
  asmOff: <><rect x="1" y="3" width="29" height="27" fill="#9a9faa" stroke="#757b88" /><path d="M1 3h29v4H1z" fill="#6d7588" /><g opacity=".6"><Cube x={6} y={9} s={0.55} a="#c9bf9c" b="#b8ac84" c="#938860" e="#807858" /><Cube x={6} y={18} s={0.55} a="#c9bf9c" b="#b8ac84" c="#938860" e="#807858" /><Cube x={15} y={18} s={0.55} a="#c9bf9c" b="#b8ac84" c="#938860" e="#807858" /></g></>,
  asmAdd: <><Yellow x={2} y={3} s={0.7} /><Yellow x={2} y={17} s={0.7} /><Yellow x={12} y={17} s={0.7} /><path d="M26 1v11M20 6.5h11" stroke="#1464f0" strokeWidth="3.4" /></>,
  asmMove: <><Yellow x={9} y={9} s={0.8} /><path d="M20 3h9v9M23 1h7v7M3 21v9h9M2 24v7h7" fill="none" stroke="#1c50b4" strokeWidth="1.4" strokeDasharray="3 1" /></>,
  mirror: <><path d="M8 2l8 6-8 6zM25 2l-8 6 8 6z" fill="#1418c8" /><path d="M16.5 1v30" stroke="#111" strokeDasharray="3 2" /><rect x="3" y="18" width="11" height="12" fill="#ffee4a" stroke="#c01414" /><path d="M19 18v12h11z" fill="#d81414" stroke="#700" /></>,
  constr: <><Flags x={1} y={4} s={0.95} /><path d="M22 1v11M15 12h15M16 30l6-12M23 30l6-12" stroke="#8c1c78" strokeWidth="1.8" /></>,
  seq: <><Cube x={12} y={2} s={0.6} a="#fffbd8" b="#f5e48a" c="#d8b848" e="#8a7420" /><Cube x={20} y={11} s={0.6} a="#fffbd8" b="#f5e48a" c="#d8b848" e="#8a7420" /><Cube x={10} y={11} s={0.6} a="#fffbd8" b="#f5e48a" c="#d8b848" e="#8a7420" /><Wrench x={1} y={12} s={0.9} /></>,
  asm3: <><Yellow x={4} y={1} s={0.7} /><Yellow x={4} y={17} s={0.7} /><Yellow x={18} y={17} s={0.7} /></>,
  steps: <><path d="M19 2h9v9h-9zM14 11h9v9h-9z" fill="#fff" stroke="#111" strokeWidth="1.3" /><path d="M8 20h10v10H8z" fill="#ffee4a" stroke="#d81414" strokeWidth="1.4" /></>,
  tagCube: <><Cube x={4} y={1} s={1.5} a="#f4f4f4" b="#d0d0d0" c="#9a9a9a" e="#666" /><Tag x={1} y={17} s={0.8} /></>,
  chainBar: <><path d="M3 12V6h6" fill="none" stroke="#111" strokeWidth="1.4" /><path d="M0 11h6l-3 6z" fill="#111" /><rect x="7" y="3" width="23" height="6" fill="#eee" stroke="#555" /><Chain x={16} y={12} s={0.72} /></>,
  relInfo: <><path d="M9 16h6l6-12M15 16h6" fill="none" stroke="#445" /><path d="M2 14h9v4H2zM20 2h10v4H20zM20 12h10v4H20z" fill="#a9bcff" stroke="#2c40b0" /><Info x={16} y={16} s={0.9} /></>,
  wire: <><path d="M1 18l7-4 7 4v8l-7 5-7-5zM1 18l7 4 7-4M8 22v9M1 26l7-4 7 4M14 6l8-5 7 4v8l-7 5-8-4zM14 6l8 4 7-5M22 10v8M14 14l8-4 7 3" fill="none" stroke="#222" strokeWidth="1.1" /><circle cx="15" cy="16" r="2.4" fill="#e02020" /></>,

  selChain: <g fill="none" stroke="#858585" strokeWidth="2"><path d="M2 12l8-3v16l-8 3zM2 20l8-2M10 25h8V17M8 2v14M3 8h12" strokeWidth="1.5" /><ellipse cx="21" cy="9" rx="4" ry="5" /><ellipse cx="25" cy="17" rx="4" ry="5" /></g>,
  selBack: <><path d="M3 8l8-6v3h6l3-3v7l-4 3h-5v3z" fill="#7f9a9c" stroke="#5f7a7c" /><path d="M14 15h15l-5 6v9h-4v-9z" fill="#a8a080" stroke="#8c8464" /></>,
  selPick: <><rect x="2" y="2" width="28" height="28" fill="#eee" stroke="#d01c1c" strokeWidth="1.6" /><path d="M4 11h13M11 4v13" stroke="#d01c1c" /><circle cx="11" cy="11" r="3" fill="none" stroke="#111" /><path d="M14 16h14l-5 6v6h-4v-6z" fill="#ffb414" stroke="#a86c08" /></>,
  selUndo: <><path d="M3 3v8h8M4 10c4-8 14-6 14 2" fill="none" stroke="#18206c" strokeWidth="2.5" /><circle cx="21" cy="21" r="5.5" fill="none" stroke="#d01c1c" strokeWidth="1.7" /><path d="M21 11v21M11 21h20" stroke="#111" strokeWidth="1.2" /></>,
  selFind: <><Bino x={1} y={1} s={0.9} /><Tree x={18} y={13} s={1.05} /></>,
  hex: <><path d="M9 2h14l8 14-8 14H9L1 16z" fill="none" stroke="#111" strokeWidth="1.6" /><circle cx="16" cy="16" r="2.7" fill="#d01c1c" /></>,
  lasso: <><rect x="4" y="5" width="25" height="22" fill="none" stroke="#222" strokeWidth="1.6" strokeDasharray="3 2" /><circle cx="4" cy="5" r="2.8" fill="#d01c1c" /><circle cx="29" cy="27" r="2.8" fill="#d01c1c" /></>,
  sheet: <><path d="M2 20C4 12 8 8 13 7l11-4 7 5v13l-10 9v-8c-4-1-7 2-9 7z" fill="#f4f4f4" stroke="#333" strokeWidth="1.4" /><path d="M13 7c4 1 7 5 8 9v8M21 16l10-8" fill="none" stroke="#333" /><path d="M9 11l8 5" stroke="#e02020" strokeWidth="2.4" /></>,
  box3: <><path d="M2 8l13-6 15 5v17l-14 7-14-6z" fill="#6cb0f8" stroke="#1c58b0" /><path d="M16 13l14-6v17l-14 7z" fill="#3c84e0" /><path d="M2 8l13-6 15 5-14 6z" fill="#eaf4ff" stroke="#888" /><path d="M13 3v17l17 7M13 4l-9 5M13 4l15 4" fill="none" stroke="#e02020" strokeWidth="1.4" /></>,
};

const Icon = ({ n, size = 'size-8' }: { n: string; size?: string }) => (
  <svg viewBox="0 0 32 32" className={`${size} shrink-0`} aria-hidden="true">{ICONS[n]}</svg>
);

/* ---------- toolbar ---------- */

const Caret = () => (
  <svg viewBox="0 0 5 3" className="h-[3px] w-[5px]" aria-hidden="true"><path d="M0 0h5L2.5 3z" fill="#000" /></svg>
);

function Bar({ children, className = '' }: { children: ReactNode; className?: string }) {
  return (
    <div role="toolbar" className={`flex h-full items-center border-t border-r border-b border-t-white border-r-[#bbb] border-b-[#bbb] ${className}`}>
      <div className="flex w-[7px] shrink-0 justify-center"><div className="h-8 border-l-2 border-dotted border-[#a2a2a2]" /></div>
      {children}
      <button aria-label="工具栏选项" className="flex w-[14px] shrink-0 justify-center self-end pb-2"><Caret /></button>
    </div>
  );
}

function Btn({ n, drop = false, on = false }: { n: string; drop?: boolean; on?: boolean }) {
  return (
    <>
      <button
        aria-label={n}
        className={`flex h-[39px] w-[39px] shrink-0 items-center justify-center ${on ? 'rounded-sm border border-[#555] bg-white' : ''}`}
      >
        <Icon n={n} />
      </button>
      {drop && <button aria-label={`${n} 选项`} className="flex h-[39px] w-3 shrink-0 items-center justify-center"><Caret /></button>}
    </>
  );
}

const Sep = () => (
  <div className="flex h-[38px] w-[6px] shrink-0 justify-center"><div className="w-[2px] border-l border-l-[#b4b4b4] border-r border-r-white" /></div>
);

const SmallBtn = ({ n, on = false }: { n: string; on?: boolean }) => (
  <button aria-label={n} className={`flex h-[30px] w-[30px] shrink-0 items-center justify-center ${on ? 'rounded-sm border border-[#555] bg-white' : ''}`}>
    <Icon n={n} size="size-6" />
  </button>
);

const SmallSep = () => <div className="mx-[2px] h-7 w-[2px] shrink-0 border-l border-l-[#aaa] border-r border-r-white" />;

function Combo({ label, value, width }: { label: string; value: string; width: string }) {
  return (
    <div className={`relative h-[22px] shrink-0 border border-[#7a7a7a] bg-white ${width}`}>
      <select aria-label={label} className="block h-5 w-full appearance-none pl-[3px] text-[15px] leading-5 text-black outline-none">
        <option>{value}</option>
      </select>
      <div className="pointer-events-none absolute inset-y-0 right-0 flex w-5 items-center justify-center border border-[#2c66b0] bg-linear-to-b from-[#cfe6fb] via-[#6fb2ee] to-[#a5d4f8]">
        <svg viewBox="0 0 10 6" className="h-[6px] w-[10px]"><path d="M0 0h10L5 6z" fill="#000" /></svg>
      </div>
    </div>
  );
}

const MENUS: [string, string][] = [
  ['文件', 'F'], ['编辑', 'E'], ['视图', 'V'], ['插入', 'S'], ['格式', 'R'], ['工具', 'T'], ['装配', 'A'],
  ['信息', 'I'], ['分析', 'L'], ['首选项', 'P'], ['窗口', 'O'], ['GC工具箱', ''], ['帮助', 'H'],
];

function NxLogo({ className }: { className: string }) {
  return (
    <svg viewBox="0 0 32 32" className={className} aria-hidden="true">
      <circle cx="15" cy="18" r="11" fill="#2a8fe0" />
      <path d="M6 14c3-5 8-6 11-5-1 5-5 9-10 10zM15 26c4-3 9-3 10-7-1 6-5 9-8 10z" fill="#5cc860" />
      <path d="M1 26c4 5 25-4 29-19-1-4-6-5-12-2 5-2 9-1 8 3-4 9-17 16-25 18z" fill="#f8c020" stroke="#b07808" strokeWidth=".6" />
      <path d="M3 3l14-2-3 16z" fill="#e02020" stroke="#8c0c0c" strokeWidth=".6" />
    </svg>
  );
}

function Header() {
  const [query, setQuery] = useState('');
  return (
    <header className="shrink-0">
      <div className="h-[3px] bg-[#53545a]" />
      <div className="flex h-[26px] items-center border-b border-black bg-[#1c1c1c] pr-1 pb-[2px] pl-[3px] text-white">
        <NxLogo className="size-5" />
        <h1 className="ml-1 flex-1 text-[15px] leading-5">NX 10 - 加工 - [一个牛B快要飞上天的刀轨——型腔铣3D流道混合切削.prt （ 修改的 ） ]</h1>
        <span className="mr-[26px] text-base leading-5 font-bold">SIEMENS</span>
        <div className="flex gap-1">
          <button aria-label="最小化" className="flex h-[21px] w-[25px] items-end justify-center rounded-sm border border-[#777] bg-linear-to-b from-[#6a6a6a] to-[#333] pb-1"><span className="h-[3px] w-2 bg-white" /></button>
          <button aria-label="还原" className="flex h-[21px] w-[25px] items-center justify-center rounded-sm border border-[#777] bg-linear-to-b from-[#6a6a6a] to-[#333]">
            <svg viewBox="0 0 12 12" className="size-3"><path d="M4 3V1h7v6H9M1 4h7v7H1z" fill="none" stroke="#fff" strokeWidth="1.5" /></svg>
          </button>
          <button aria-label="关闭" className="flex h-[21px] w-[25px] items-center justify-center rounded-sm border border-[#e88c74] bg-linear-to-b from-[#f08870] to-[#e03418]">
            <svg viewBox="0 0 12 12" className="size-3"><path d="M1 1l10 10M11 1L1 11" stroke="#fff" strokeWidth="2.4" /></svg>
          </button>
        </div>
      </div>

      <div className="bg-linear-to-b from-[#e7e7e7] to-[#cbcbcb]">
        <div className="flex h-[42px] pl-[300px]">
          <Bar className="border-l border-l-white">
            <Btn n="fit" drop /><Btn n="orient" drop /><Btn n="shade" drop /><Btn n="clip" /><Btn n="clip2" drop /><Btn n="face" drop />
            <Sep />
            <Btn n="plane" /><Btn n="flip" />
          </Bar>
          <Bar className="ml-[474px] border-l border-l-white">
            <Btn n="layers" /><Btn n="wcs" drop /><Sep /><Btn n="show" /><Btn n="style" /><Sep /><Btn n="move" drop /><Sep /><Btn n="arc" drop /><Btn n="ruler" />
          </Bar>
        </div>

        <div className="flex h-[42px]">
          <Bar>
            <button className="flex w-[83px] shrink-0 items-center gap-1 pl-1 text-[15px] text-black"><NxLogo className="size-8" />启动<Caret /></button>
            <Btn n="new" /><Btn n="open" /><Btn n="save" /><Btn n="print" /><Sep />
            <Btn n="cut" /><Btn n="copy" /><Btn n="paste" /><Btn n="del" /><Sep />
            <Btn n="undo" drop /><Sep /><Btn n="nav" drop /><Sep /><Btn n="cmdinfo" /><Sep />
            <label className="ml-[2px] flex h-[25px] w-[174px] items-center border border-[#a8a8a8] bg-white px-1">
              <input
                aria-label="查找命令"
                placeholder="查找命令"
                value={query}
                onChange={e => setQuery(e.target.value)}
                className="w-0 flex-1 text-[15px] leading-5 outline-none placeholder:text-[#999]"
              />
              <svg viewBox="0 0 16 16" className="size-4"><circle cx="10" cy="5.5" r="4.5" fill="none" stroke="#444" strokeWidth="1.3" /><circle cx="10" cy="5.5" r="2" fill="none" stroke="#999" /><path d="M7 9l-5 5" stroke="#555" strokeWidth="2.6" /></svg>
            </label>
          </Bar>
        </div>

        <div className="flex h-[42px]">
          <Bar><Btn n="mkProg" /><Btn n="mkTool" /><Btn n="mkGeom" /><Btn n="mkMeth" /><Btn n="mkOp" /></Bar>
          <Bar><Btn n="opEdit" /><Btn n="opCut" /><Btn n="opCopy" /><Btn n="opPaste" /><Btn n="pasteIn" /><Btn n="opDel" /><Btn n="opInfo" /><Btn n="opTorch" /></Bar>
          <Bar><Btn n="gen" /><Btn n="replay" /><Btn n="verify" /><Btn n="post" /><Btn n="machineOk" /><Btn n="compare" /><Sep /><Btn n="toMachine" /><Btn n="shop" /><Btn n="opTime" /></Bar>
          <Bar><Btn n="coilTorch" /><Btn n="replay" /><Btn n="feed" on /><Btn n="rapid" on /><Btn n="circle" /><Btn n="spline" /><Btn n="pathPal" /><Btn n="treePal" /><Btn n="toolPal" /></Bar>
          <Bar><Btn n="holdPt" /><Btn n="hold" drop /><Btn n="holdIn" drop /><Btn n="part3d" drop /></Bar>
        </div>

        <nav className="flex h-7 items-center border-t border-b border-t-white border-b-[#bbb] pr-1 pb-1">
          <div className="flex w-2 justify-center"><div className="h-5 border-l-2 border-dotted border-[#a2a2a2]" /></div>
          <Icon n="gen" size="size-5" />
          <div className="flex flex-1 items-center gap-4 pl-[6px] text-[15px] leading-5 text-black">
            {MENUS.map(([name, key]) => (
              <button key={name} className={name === '首选项' ? 'ml-2' : ''}>
                {name}{key && <>(<u>{key}</u>)</>}
              </button>
            ))}
          </div>
          <div className="flex gap-[2px] pt-[2px] pr-px text-[#555]">
            <button aria-label="最小化窗口" className="flex h-[17px] w-[17px] items-end justify-center rounded-sm border border-[#888] bg-[#f2f2f2] pb-[3px]"><span className="h-[2px] w-2 bg-[#555]" /></button>
            <button aria-label="还原窗口" className="flex h-[17px] w-[17px] items-center justify-center rounded-sm border border-[#888] bg-[#f2f2f2]">
              <svg viewBox="0 0 12 12" className="size-[10px]"><path d="M4 3V1h7v6H9M1 4h7v7H1zM1 6h7" fill="none" stroke="#555" strokeWidth="1.6" /></svg>
            </button>
            <button aria-label="关闭窗口" className="flex h-[17px] w-[17px] items-center justify-center rounded-sm border border-[#888] bg-[#f2f2f2]">
              <svg viewBox="0 0 12 12" className="size-[10px]"><path d="M2 1l8 10M10 1L2 11" stroke="#555" strokeWidth="3" /></svg>
            </button>
          </div>
        </nav>

        <div className="flex h-[42px] pl-[178px]">
          <Bar className="border-l border-l-white">
            <Btn n="spOk" /><Btn n="spPage" /><Btn n="spTree" /><Btn n="spGrid" /><Sep /><Btn n="probe" /><Sep /><Btn n="wand" /><Btn n="shop" /><Sep />
            <Btn n="list" /><Btn n="opEdit" /><Btn n="opTime" /><Btn n="sim" />
          </Bar>
          <Bar>
            <Btn n="profile" on /><Btn n="feats" /><Sep /><Btn n="find" /><Btn n="tagPt" /><Btn n="tagO" /><Btn n="tagCyl" /><Btn n="tagBox" /><Sep /><Btn n="feat2" /><Sep /><Btn n="del" />
          </Bar>
        </div>
      </div>

      <div className="flex h-[34px] items-center border-t-2 border-b border-t-[#8d8f8f] border-b-[#eee] bg-linear-to-b from-[#c6c6c6] to-[#dadada] px-[6px] pb-[2px]">
        <Combo label="类型过滤器" value="没有选择过滤器" width="w-[181px]" />
        <div className="w-[9px] shrink-0" />
        <Combo label="选择范围" value="整个装配" width="w-[191px]" />
        <div className="w-[6px] shrink-0" />
        <SmallBtn n="selChain" /><SmallSep /><SmallBtn n="selBack" /><SmallBtn n="selPick" />
        <button aria-label="捕捉选项" className="flex w-3 justify-center"><Caret /></button>
        <SmallBtn n="selUndo" /><SmallBtn n="selFind" /><SmallSep /><SmallBtn n="hex" /><SmallBtn n="lasso" />
        <button aria-label="套索选项" className="flex w-3 justify-center"><Caret /></button>
        <SmallSep /><SmallBtn n="sheet" /><SmallBtn n="box3" on />
        <button aria-label="更多" className="mt-3 ml-auto"><Caret /></button>
      </div>
    </header>
  );
}

/* ---------- resource bar ---------- */

const TABS: { name: string; gap?: boolean; active?: boolean; art: ReactNode }[] = [
  { name: '装配导航器', art: <><Yellow x={5} y={1} s={0.5} /><Yellow x={4} y={8} s={0.5} /><Yellow x={11} y={8} s={0.5} /><path d="M6 18v14M6 25h9M20 16h12" stroke="#101c90" strokeWidth="1.3" /><Yellow x={18} y={21} s={0.6} /></> },
  { name: '约束导航器', art: <><path d="M8 1l8 6-8 6zM24 1l-8 6 8 6z" fill="#1414b8" /><path d="M16 0v32" stroke="#111" strokeDasharray="3 2" /><rect x="3" y="18" width="11" height="12" fill="#ffee4a" stroke="#c8780c" /><path d="M18 17v13h12z" fill="#c81414" /></> },
  { name: '部件导航器', art: <><path d="M2 4v8q6 5 13 0V4z" fill="#b85cb0" stroke="#7c2474" /><ellipse cx="8.5" cy="4" rx="6.5" ry="3" fill="#e8b4e4" stroke="#7c2474" /><path d="M6 17v15M6 25h9" stroke="#101c90" strokeWidth="1.3" /><path d="M19 14h13" stroke="#111" /><circle cx="22" cy="25" r="5.5" fill="#f8eaf6" stroke="#8c2c80" strokeWidth="1.5" /><circle cx="22" cy="25" r="2" fill="none" stroke="#8c2c80" /></> },
  { name: '工序导航器', active: true, art: <><path d="M3 1h7v14H3z" fill="#3c98ec" stroke="#1c60b0" strokeWidth=".8" /><path d="M3 5l7-3M3 9l7-3M3 13l7-3" stroke="#1058a8" strokeWidth=".8" /><path d="M13 4h11l-4 3h-8M20 8l-4 3h-4" fill="none" stroke="#4878c8" strokeWidth="1.2" /><path d="M6 16v15M6 24h8" stroke="#101c90" strokeWidth="1.2" /><path d="M16 14h14" stroke="#111" /><path d="M18 20h5v4h5v6H18z" fill="#e8f2ff" stroke="#1c60c8" strokeWidth="1.2" /></> },
  { name: '加工特征导航器', art: <><path d="M2 8l20-8v20L2 29zM2 15l20-7M2 22l20-8M8 6v20M15 3v20" fill="#f4f0e8" stroke="#d88a34" /><path d="M2 8l20-8" stroke="#7c40b8" strokeWidth="1.5" /><path d="M12 17l10-4 10 3v9l-10 6-10-4z" fill="#3c84e8" stroke="#1c50a8" strokeWidth=".7" /><path d="M12 17l10-4 10 3-11 5z" fill="#f89a28" /><path d="M14 22l6 1v3l-6-1z" fill="#a04c08" /></> },
  { name: '机床导航器', art: <><Machine x={2} y={8} /><Cube x={21} y={1} s={0.55} a="#ffe3a8" b="#ffc23c" c="#f07414" e="#d81414" /><path d="M10 9c1-5 5-6 9-5" fill="none" stroke="#f0641c" strokeWidth="2.3" /></> },
  { name: '重用库', art: <><path d="M1 9l7-7h6l-6 7zM9 9l7-7h6l-6 7zM17 9l7-7h7l-6 7z" fill="#fff" stroke="#888" strokeWidth=".6" /><path d="M1 9h8v21H1z" fill="#f0b43c" stroke="#c8500c" /><path d="M9 9h8v21H9z" fill="#5ce83c" stroke="#0c8c14" /><path d="M17 9h8v21h-8z" fill="#4ca8f8" stroke="#1454b8" /><path d="M25 9l6-7v20l-6 8z" fill="#2c74e0" /><path d="M1 13h8M1 17h8M9 26h8M17 14h8M17 19h8" stroke="#555" strokeWidth=".7" /></> },
  { name: 'HD3D 工具', gap: true, art: <><path d="M11 2c12 0 20 8 20 19M11 7c9 0 14 6 15 14" fill="none" stroke="#2c68d8" strokeWidth="3" /><circle cx="11" cy="21" r="10" fill="#1c7ce8" stroke="#0c4ca8" /><text x="11" y="28" fontFamily="Liberation Serif, serif" fontWeight="bold" fontSize="21" textAnchor="middle" fill="#fff">i</text></> },
  { name: '浏览器', gap: true, art: <><path d="M5 2h15l8 8v21H5z" fill="#fff" stroke="#2c5cb8" strokeWidth="1.4" /><path d="M20 2v8h8" fill="#e0e8f8" stroke="#2c5cb8" /><circle cx="17" cy="19" r="7.5" fill="#4ca4e8" /><path d="M10 17c2-5 6-6 8-5l-3 5 1 8c-4-1-6-4-6-8zM21 13c4 4 4 8 1 11l-3-4z" fill="#2c941c" /></> },
  { name: '历史记录', gap: true, art: <><circle cx="16" cy="16" r="13.5" fill="#dcecfc" stroke="#70767c" strokeWidth="2.4" /><path d="M16 6v10h8" fill="none" stroke="#111" strokeWidth="1.8" /><circle cx="16" cy="16" r="2" fill="#111" /><circle cx="16" cy="16" r="10.5" fill="none" stroke="#345" strokeWidth="1.5" strokeDasharray="1 4.5" /></> },
];

function ResourceBar() {
  return (
    <div className="flex w-[39px] shrink-0 flex-col border-r border-[#777] bg-linear-to-r from-[#b4b4b4] to-[#a4a4a4]">
      <button aria-label="资源条选项" className="mt-2 flex h-[14px] justify-center pr-[2px]">
        <svg viewBox="0 0 14 14" className="size-[14px]"><circle cx="7" cy="7" r="4.5" fill="none" stroke="#222" strokeWidth="1.3" /><circle cx="7" cy="7" r="1.3" fill="#222" /><path d="M7 0v2M7 12v2M0 7h2M12 7h2M2 2l1.5 1.5M10.5 10.5L12 12M2 12l1.5-1.5M10.5 3.5L12 2" stroke="#222" strokeWidth="1.5" /></svg>
      </button>
      <div role="tablist" className="mt-[23px] flex min-h-0 flex-1 flex-col gap-[2px] overflow-hidden">
        {TABS.map(t => (
          <button
            key={t.name}
            role="tab"
            aria-selected={!!t.active}
            aria-label={t.name}
            className={`flex h-12 shrink-0 items-center justify-center rounded-l border border-r-0 border-[#666] ${t.gap ? 'mt-3' : ''} ${t.active ? 'ml-[2px] bg-[#ebebeb]' : 'ml-1 bg-linear-to-r from-[#e2e2e2] to-[#cfcfcf]'}`}
          >
            <svg viewBox="0 0 32 32" className="size-8">{t.art}</svg>
          </button>
        ))}
        <button aria-label="角色" className="ml-1 flex h-12 shrink-0 items-start rounded-l border border-r-0 border-[#666] bg-[#d8d8d8] pt-2 pl-1"><span className="h-4 w-3 bg-[#f03c14]" /></button>
      </div>
      <div className="flex flex-col items-center gap-px border-t-2 border-[#777] pt-1 pr-[2px] pb-[2px]">
        {['M1 1h8v1H1zM5 3l4 4H1z', 'M5 2l4 4H1z', 'M1 2h8L5 6z', 'M1 1h8L5 5zM1 6h8v1H1z'].map((d, i) => (
          <button key={d} aria-label="滚动" className="flex h-[15px] w-[15px] items-center justify-center border border-t-[#eee] border-r-[#777] border-b-[#777] border-l-[#eee] bg-[#dedede]">
            <svg viewBox="0 0 10 8" className="h-2 w-[10px]"><path d={d} fill={i < 2 ? '#999' : '#333'} /></svg>
          </button>
        ))}
      </div>
    </div>
  );
}

/* ---------- operation navigator ---------- */

const TreeArt = ({ w, children }: { w: string; children: ReactNode }) => (
  <svg className={`h-5 shrink-0 ${w}`} aria-hidden="true">{children}</svg>
);
const dots = { fill: 'none', stroke: '#999', strokeDasharray: '1 2' };

function NavRow({ children, sel = false }: { children?: ReactNode; sel?: boolean }) {
  return (
    <tr className="h-5 odd:bg-white even:bg-[#f6f6f6]">
      <td className="border-b border-[#e2e2e2] p-0"><div className="flex h-[19px] items-center overflow-hidden leading-[19px]">{children}</div></td>
      <td className={`border-b border-l border-b-[#e2e2e2] border-l-black p-0 ${sel ? 'bg-[#0078d7]' : ''}`}>
        {sel && <svg viewBox="0 0 12 12" className="ml-[6px] size-3"><path d="M0 6l3-1 2 3 5-7 2 0-6 11H4z" fill="#1fc43c" /></svg>}
      </td>
    </tr>
  );
}

function Navigator() {
  return (
    <aside className="flex w-[276px] shrink-0 flex-col border-t border-[#888] bg-[#ebebeb] pr-[10px] pb-[6px] pl-[7px]">
      <div className="flex h-9 shrink-0 items-center justify-between pr-[6px] pl-[6px]">
        <h2 className="text-base leading-5 font-bold text-black">工序导航器 - 几何</h2>
        <button aria-label="浮动" className="h-[15px] w-[15px] border border-t-[3px] border-black" />
      </div>
      <div className="flex min-h-0 flex-1 flex-col border border-[#666] bg-white">
        <div className="min-h-0 flex-1 overflow-hidden">
          <table className="w-full table-fixed border-separate border-spacing-0 text-[15px] text-[#333]">
            <thead>
              <tr className="h-[22px] bg-linear-to-b from-[#f4f4f4] via-[#e6e7e8] to-[#d6d8da] text-left text-black">
                <th className="w-[200px] border-b border-[#888] p-0 pl-[7px] leading-5 font-normal">名称</th>
                <th className="border-b border-l border-[#888] p-0 pl-[6px] leading-5 font-normal">刀轨</th>
              </tr>
            </thead>
            <tbody>
              <NavRow><span className="pl-1">GEOMETRY</span></NavRow>
              <NavRow>
                <TreeArt w="w-[39px]"><path d="M9.5 20V10H20" {...dots} /><path d="M20 5h5l1 2h8v10H20z" fill="#ffe98a" stroke="#a88c2c" /><path d="M27 9h5v2h-4M32 11v5h-5v-3h5" fill="none" stroke="#1414c8" strokeWidth="1.4" /></TreeArt>
                未用项
              </NavRow>
              <NavRow>
                <TreeArt w="w-[39px]">
                  <path d="M9.5 0v6M14 10h6" {...dots} /><rect x="4.5" y="5.5" width="9" height="9" rx="1" fill="#fff" stroke="#888" /><path d="M6 10h6" stroke="#333" />
                  <path d="M21 3v11l10 3" fill="none" stroke="#444" strokeWidth="1.2" /><path d="M21 14l9-6" stroke="#1c8c2c" strokeWidth="1.8" /><path d="M19 6l2-4 2 4z" fill="#1424c0" /><circle cx="22" cy="13" r="2.5" fill="#d01414" /><circle cx="28" cy="16" r="2" fill="#d01414" />
                </TreeArt>
                MCS
              </NavRow>
              <NavRow>
                <TreeArt w="w-[57px]"><path d="M28.5 0v5M33 10h6" {...dots} /><rect x="23.5" y="5.5" width="9" height="9" rx="1" fill="#fff" stroke="#888" /><path d="M25 10h6" stroke="#333" /><path d="M39 7l7-4 7 3v7l-6 5-8-4z" fill="#7d8fe0" stroke="#2c3c9c" /><path d="M39 7l7 3 7-4M46 10v8M42 5l7 3v4" fill="none" stroke="#dfe5ff" /></TreeArt>
                WP
              </NavRow>
              <NavRow sel>
                <TreeArt w="w-[90px]"><path d="M47.5 0v10H57" {...dots} /><circle cx="65" cy="10" r="6" fill="#fff" stroke="#d01818" strokeWidth="2" /><path d="M61 14l8-8" stroke="#d01818" strokeWidth="2" /><path d="M75 6c0 8 4 12 13 12V6z" fill="#3ce4e4" stroke="#053c3c" /><path d="M75 6c0 8 4 12 13 12" fill="none" stroke="#063838" strokeWidth="2.5" /><rect x="81" y="3" width="5" height="10" fill="#5c6cd4" /></TreeArt>
                <span className="flex-1 self-stretch border border-dotted border-[#e8a040] bg-[#0078d7] pl-[2px] leading-[17px] text-white">CAVITY_MILL</span>
              </NavRow>
              {Array.from({ length: 40 }, (_, i) => <NavRow key={i} />)}
            </tbody>
          </table>
        </div>
        <div className="flex h-[22px] shrink-0 items-center bg-[#f0f0f0] px-1">
          <button aria-label="向左滚动" className="flex w-[17px] justify-center"><svg viewBox="0 0 8 10" className="h-[10px] w-2"><path d="M6.5 1l-5 4 5 4" fill="none" stroke="#444" strokeWidth="2" /></svg></button>
          <div className="h-[19px] w-[83px] bg-[#cdcdcd]" />
          <button aria-label="向右滚动" className="ml-auto flex w-[17px] justify-center"><svg viewBox="0 0 8 10" className="h-[10px] w-2"><path d="M1.5 1l5 4-5 4" fill="none" stroke="#444" strokeWidth="2" /></svg></button>
        </div>
      </div>
      <div className="flex h-3 shrink-0 items-center gap-1">
        <div className="h-px flex-1 bg-[#aaa]" />
        <div className="h-[6px] w-[47px] border border-t-white border-r-[#888] border-b-[#888] border-l-white bg-[#d4d4d4]" />
        <div className="h-px flex-1 bg-[#aaa]" />
      </div>
      {['相依性', '细节'].map(name => (
        <button key={name} className="flex h-[26px] shrink-0 items-stretch border-r border-b border-[#999] bg-linear-to-b from-[#f8f8f8] via-[#ebeced] to-[#dadcde] text-left">
          <span className="flex-1 pl-[7px] text-base leading-6 font-bold text-black">{name}</span>
          <span className="flex w-[25px] items-center justify-center border-l border-[#999]">
            <svg viewBox="0 0 12 10" className="h-[10px] w-3"><path d="M1.5 1L6 8l4.5-7" fill="none" stroke="#555" strokeWidth="2.4" /></svg>
          </span>
        </button>
      ))}
    </aside>
  );
}

/* ---------- graphics window ---------- */

// smooth y(x) through the points, written out as cubic segments
function curve(pts: Pt[], lead = 'M') {
  const slope = pts.map((p, i) => {
    const a = pts[i - 1] ?? p;
    const b = pts[i + 1] ?? p;
    if (a === p || b === p) return (b[1] - a[1]) / (b[0] - a[0]);
    const h0 = p[0] - a[0];
    const h1 = b[0] - p[0];
    return (((p[1] - a[1]) / h0) * h1 + ((b[1] - p[1]) / h1) * h0) / (h0 + h1);
  });
  let d = `${lead}${pts[0][0]} ${pts[0][1]}`;
  for (let i = 0; i < pts.length - 1; i++) {
    const [x0, y0] = pts[i];
    const [x1, y1] = pts[i + 1];
    const h = (x1 - x0) / 3;
    d += `C${x0 + h} ${y0 + slope[i] * h} ${x1 - h} ${y1 - slope[i + 1] * h} ${x1} ${y1}`;
  }
  return d;
}
const rev = (pts: Pt[]) => [...pts].reverse();

const BACK: Pt[] = [[624, 293.5], [653, 288], [683, 286.6], [730, 291], [770, 301.5], [818, 322.5], [860, 341], [897, 352], [935, 358.5], [967, 360], [1013, 356], [1067, 340], [1100, 323], [1130, 302], [1138, 297], [1146, 294.5], [1158, 294]];
const FRONT: Pt[] = [[546.7, 570], [580, 565], [613, 564], [663, 570], [701, 581], [741, 599], [780, 616.5], [830, 631], [887, 637.3], [946, 631.5], [993, 616], [1027, 597], [1052, 578.3], [1066, 572], [1080, 570.7]];
const TEAL: Pt[] = [[540, 516], [561, 516.7], [590, 512], [623, 510.3], [660, 514], [697, 523.5], [750, 546], [793, 565], [840, 578.5], [897, 584], [940, 581.5], [980, 573], [1027, 554], [1063, 528], [1080, 519.5], [1097, 517.5]];
const CYAN_TOP: Pt[] = [[540, 523], [561, 523.7], [590, 519], [623, 517], [660, 521], [697, 530.5], [750, 553], [793, 571.5], [840, 585], [897, 590.5], [940, 587], [980, 577], [1027, 556], [1063, 529], [1080, 524], [1097, 524]];
const CYAN_BOT: Pt[] = [[540, 530], [563, 530], [590, 526.5], [623, 525], [667, 529.7], [713, 542], [747, 557.3], [780, 572.5], [830, 590.5], [897, 598], [940, 594.5], [983, 584], [1033, 560], [1067, 537.5], [1083, 532], [1097, 531]];

function Scene() {
  return (
    <main className="relative min-w-0 flex-1 overflow-hidden bg-linear-to-b from-[#212224] via-[#434446] via-50% to-[#57585b]">
      <svg viewBox="315 259 1605 665" className="block h-full w-full" role="img" aria-label="型腔铣刀轨">
        <defs>
          <linearGradient id="wave" gradientUnits="userSpaceOnUse" x1="624" y1="294" x2="1119" y2="432.6">
            <stop offset="0" stopColor="#cdb663" />
            <stop offset=".1" stopColor="#dac26a" />
            <stop offset=".2" stopColor="#e2c96e" />
            <stop offset=".29" stopColor="#e0c76d" />
            <stop offset=".378" stopColor="#dac26a" />
            <stop offset=".46" stopColor="#e0c86d" />
            <stop offset=".56" stopColor="#e2ca6f" />
            <stop offset=".66" stopColor="#d8c069" />
            <stop offset=".76" stopColor="#c6af5f" />
            <stop offset=".85" stopColor="#ad9853" />
            <stop offset=".93" stopColor="#907e45" />
            <stop offset=".95" stopColor="#9f8b4c" />
            <stop offset=".975" stopColor="#c8b160" />
            <stop offset="1" stopColor="#dfc66d" />
          </linearGradient>
          <pattern id="passes" width="4" height="4" patternUnits="userSpaceOnUse" patternTransform="rotate(35)">
            <rect width="4" height="4" fill="#00ffff" />
            <path d="M0 2h2" stroke="#00cfd4" strokeWidth=".6" />
          </pattern>
        </defs>

        {/* solid body */}
        <path d="M1275 300L1283 479 1204 755.5 1196 576.5z" fill="#8f7f45" />
        <path d={`M532 721L525 569.5${curve(FRONT, 'L')}L1196 576.5 1204 755.5z`} fill="#62572f" />
        <path d="M603 292.5L624 293.5 546.7 570 525 569.5z" fill="#dfc66d" />
        <path d={`${curve(BACK)}${curve(rev(FRONT), 'L')}z`} fill="url(#wave)" />
        <path d="M1158 294L1275 300 1196 576.5 1080 570.7z" fill="#dfc66d" />

        {/* edges, hidden ones included */}
        <g fill="none" stroke="#a9944e" strokeWidth="1">
          <path d="M603 292.5L610 444 532 721M610 444L1283 479M624 293.5L546.7 570M818 322.5L741 599M1158 294L1080 570.7" />
          <path d="M1129 303L1051 579" strokeOpacity=".6" />
          <path d={`M525 569.5${curve(FRONT, 'L')}L1196 576.5`} />
          <path d={`M525 569.5L603 292.5${curve(BACK, 'L')}L1275 300 1196 576.5 1204 755.5 532 721zM1275 300L1283 479 1204 755.5`} stroke="#b6a052" />
        </g>

        {/* tool path */}
        <path d={`${curve(TEAL)}L1210.7 523.7V531L1097 525${curve(rev(CYAN_TOP), 'L')}z`} fill="#04504f" />
        <path d={`${curve(CYAN_TOP)}L1210 530 1231 532 1231 543 1209 541.5 1207 537${curve(rev(CYAN_BOT), 'L')}L535 534 517 533.5V522.5z`} fill="url(#passes)" />
        <g fill="none" stroke="#0c6a68" strokeWidth="1.2">
          <path d="M561 517v14c-1 6-4 6-4 1M752 548l-3 13c-2 5-3 4-1 0M1064 530c6 2 12 9 8 13-3 3-8 1-11-3M1095.5 518l-1 15c0 4-3 4-2 0" />
        </g>
        <path d="M540.5 516v14c0 8-5 8-4 1" fill="none" stroke="#b6a052" />
        <path d="M508.5 397L514 511" stroke="#1410b8" strokeWidth="1.6" />
        <path d="M514 511l1 10 2 2" fill="none" stroke="#d89c18" strokeWidth="1.5" />
        <path d="M1228.5 434L1232 520" stroke="#1c18b0" strokeWidth="1.6" />
        <path d="M1232 520v22" stroke="#f0cdd8" strokeWidth="1.6" />

        {/* machine coordinate system */}
        <path d="M899 421L911.5 375" stroke="#2a9c34" strokeWidth="2" />
        <path d="M915.5 364l.5 13-8-2z" fill="#36b040" />
        <ellipse cx="912" cy="376" rx="3.5" ry="2" fill="#145c1c" />
        <path d="M899 421L982 425.5" stroke="#c82424" strokeWidth="2" />
        <path d="M981 421.5L1002.5 426 981 429z" fill="#e03434" />
        <path d="M899 421L895.5 350" stroke="#0a30c0" strokeWidth="2.4" />
        <path d="M895 333l4.5 18h-8z" fill="#0a38c8" />
        <g fontFamily="Liberation Serif, serif" fontSize="14">
          <text x="898" y="332" fill="#1440c8">ZM</text>
          <text x="901" y="363" fill="#36a030">M</text>
          <text x="982" y="441" fill="#d02828">XM</text>
        </g>

        {/* view triad */}
        <path d="M371.5 835L395 836.5V857L393 866H372z" fill="#a9abaa" />
        <path d="M371 862l5-20M374 840l2 3 3-4" stroke="#8fc494" fill="none" />
        <path d="M370 866l-1.5-28" stroke="#0a30c0" strokeWidth="3" />
        <path d="M368.5 834l3.5 10h-7z" fill="#0a38c8" />
        <path d="M370 866.5l30 1" stroke="#d82424" strokeWidth="2.4" />
        <path d="M397 865l11 3-11 3z" fill="#d82424" />
        <circle cx="370" cy="866" r="4.5" fill="#d8d8d8" />
        <g fontFamily="Liberation Serif, serif" fontSize="14">
          <text x="364" y="835" fill="#1c48d0">Z</text>
          <text x="408" y="873" fill="#d02828">X</text>
        </g>
      </svg>

      {/* level meter docked on the screen edge */}
      <div className="absolute top-[62px] right-0 flex h-[73px] w-3 flex-col justify-center gap-[2px] rounded-l-md border border-r-0 border-[#1a1d28] bg-[#333848] pr-[2px] pl-1">
        {Array.from({ length: 15 }, (_, i) => (
          <span key={i} className={`h-[2px] ${i < 8 ? 'bg-[#20242f]' : i < 11 ? 'bg-[#8fa84a]' : 'bg-[#42b08c]'}`} />
        ))}
      </div>
    </main>
  );
}

/* ---------- watermark and input method bar ---------- */

function Overlay() {
  return (
    <>
      <div className="pointer-events-none absolute right-[25px] bottom-[14px] flex items-center gap-[6px]">
        <svg viewBox="0 0 72 80" className="h-20 w-[72px] opacity-80">
          <path d="M36 0l36 20v40L36 80 0 60V20z" fill="#7cc4e6" />
          <path d="M0 20L36 0l16 8c6 8 4 18 3 26L36 22z" fill="#bddcea" />
          <path d="M0 20l14-7c12-1 22 3 30 10L16 36c-4 10-10 18-15 24z" fill="#9fd2e8" />
          <path d="M52 8l20 12v40c-8 4-16 2-24-2 8-14 12-32 4-50z" fill="#6abce2" />
          <path d="M0 60c6-14 14-26 30-34M52 8c8 22 2 40-14 56M72 40c-4 14-16 22-36 20" fill="none" stroke="#dcdcdc" strokeWidth="1.5" />
          <path d="M36 22l16 9v19l-16 9-16-9V31z" fill="#9cd0e8" stroke="#e2e2e2" strokeWidth="3" />
          <path d="M36 40l16-9v19l-16 9z" fill="#4cacd8" />
          <path d="M36 40L20 31v19l16 9z" fill="#78c0e0" />
        </svg>
        <span className="-mt-4 text-[42px] leading-10 font-bold text-[#ebebeb]">3D世界网</span>
      </div>
      <div className="absolute right-1 bottom-[10px] flex h-7 w-[218px] items-center justify-between border border-[#b8ccdc] bg-white pr-1 pl-1 text-[#1f74cc]">
        <button className="text-lg leading-6 font-bold">中</button>
        <button aria-label="半角"><svg viewBox="0 0 20 20" className="size-[18px]"><path d="M13 1c8 8 3 18-5 18-3 0-6-2-8-5 8 2 14-4 13-13z" fill="currentColor" /></svg></button>
        <button aria-label="中文标点"><svg viewBox="0 0 18 20" className="size-[18px]"><circle cx="4" cy="6" r="2.5" fill="none" stroke="currentColor" strokeWidth="2" /><path d="M11 8h5c1 5-1 8-5 10 2-3 1-4 0-5z" fill="currentColor" /></svg></button>
        <button aria-label="语音"><svg viewBox="0 0 18 20" className="h-5 w-[18px]"><rect x="5.5" y="0" width="7" height="12" rx="3.5" fill="currentColor" /><path d="M2 8c0 9 14 9 14 0M9 15v4M4 19h10" fill="none" stroke="currentColor" strokeWidth="2" /></svg></button>
        <button aria-label="软键盘"><svg viewBox="0 0 20 16" className="h-4 w-5"><rect x="1" y="1" width="18" height="14" rx="2" fill="none" stroke="currentColor" strokeWidth="2" /><path d="M3 5h14M3 8h14" stroke="currentColor" strokeWidth="2" strokeDasharray="2 1" /><path d="M5 12h10" stroke="currentColor" strokeWidth="2" /></svg></button>
        <button aria-label="账户"><svg viewBox="0 0 18 20" className="size-[18px]"><circle cx="8" cy="5" r="4" fill="#b4bfd8" /><path d="M1 18c0-10 14-10 14 0z" fill="#b4bfd8" /><rect x="10" y="11" width="7" height="8" fill="#fff" stroke="#a8b4cc" /></svg></button>
        <button aria-label="皮肤"><svg viewBox="0 0 18 20" className="size-[18px]"><path d="M5 2q4 4 8 0l5 4-3 4-1-1v10H4V9l-1 1-3-4z" fill="currentColor" /></svg></button>
        <button aria-label="工具箱"><svg viewBox="0 0 20 20" className="size-[18px]"><path d="M18 3l-4 4-3-1 0-3 3-3c-5-1-8 3-6 7l-8 8q0 4 4 4l8-8c5 1 8-3 6-8z" fill="currentColor" /></svg></button>
      </div>
      <button
        aria-label="输入法"
        className="absolute right-[226px] bottom-[11px] flex h-[30px] w-[30px] -rotate-12 items-center justify-center rounded-md border-t-4 border-[#f0501c] bg-linear-to-b from-[#6c8fa0] from-50% to-[#f0501c] to-50% font-['Liberation_Sans',sans-serif] text-[28px] leading-7 font-bold text-white"
      >
        S
      </button>
    </>
  );
}

export default function App() {
  return (
    <div className="flex h-screen flex-col overflow-hidden bg-[#d4d4d4] font-['Noto_Sans','Noto_Sans_CJK_SC',sans-serif]">
      {/* gradients shared by the icons */}
      <svg className="absolute h-0 w-0" aria-hidden="true">
        <defs>
          <linearGradient id="drill"><stop offset="0" stopColor="#3c4cac" /><stop offset=".45" stopColor="#9cb0ff" /><stop offset="1" stopColor="#2c3c94" /></linearGradient>
          <linearGradient id="steel" x2="0" y2="1"><stop offset="0" stopColor="#6c8490" /><stop offset=".35" stopColor="#dcebf2" /><stop offset="1" stopColor="#4c626e" /></linearGradient>
          <linearGradient id="heat"><stop offset="0" stopColor="#e82010" /><stop offset=".45" stopColor="#ffd020" /><stop offset=".8" stopColor="#30c830" /></linearGradient>
        </defs>
      </svg>

      <Header />

      <div className="flex min-h-0 flex-1">
        <ResourceBar />
        <Navigator />
        <Scene />
      </div>

      <footer className="relative shrink-0">
        <div className="bg-linear-to-b from-[#e6e6e6] to-[#cbcbcb]">
          <div className="flex h-[42px]">
            <Bar><Btn n="gNav" /><Btn n="tNav" /><Btn n="pNav" on /><Btn n="wNav" /></Bar>
            <Bar><Btn n="wave" drop /><Btn n="chain" /><Btn n="plus" drop /><Btn n="extract" drop /><Btn n="cyl" /><Btn n="copyF" /><Btn n="facet" drop /></Bar>
          </div>
          <div className="flex h-[42px]">
            <Bar>
              <Btn n="bCube" drop /><Btn n="asmDash" /><Btn n="asmOff" /><Btn n="asmAdd" drop /><Btn n="asmMove" /><Btn n="mirror" /><Btn n="constr" /><Sep />
              <Btn n="seq" /><Btn n="asm3" /><Btn n="steps" /><Sep /><Btn n="tagCube" /><Sep /><Btn n="chain" /><Btn n="chainBar" /><Btn n="relInfo" /><Sep /><Btn n="wire" drop />
            </Bar>
          </div>
        </div>
        <div className="flex h-[22px] border-t border-b border-t-white border-b-[#888] bg-[#d8d8d8] text-[15px] leading-[18px] font-bold text-black">
          <div className="w-[47.5%] border-r border-[#aaa]" />
          <p className="pl-1">全部 1</p>
        </div>
        <div className="flex h-[9px] bg-linear-to-r from-[#3c0c1e] via-[#5c1a30] to-[#6a2440]">
          <div className="ml-[32%] h-full w-[61px] bg-[#8a1c4a]" />
        </div>
        <Overlay />
      </footer>
    </div>
  );
}
